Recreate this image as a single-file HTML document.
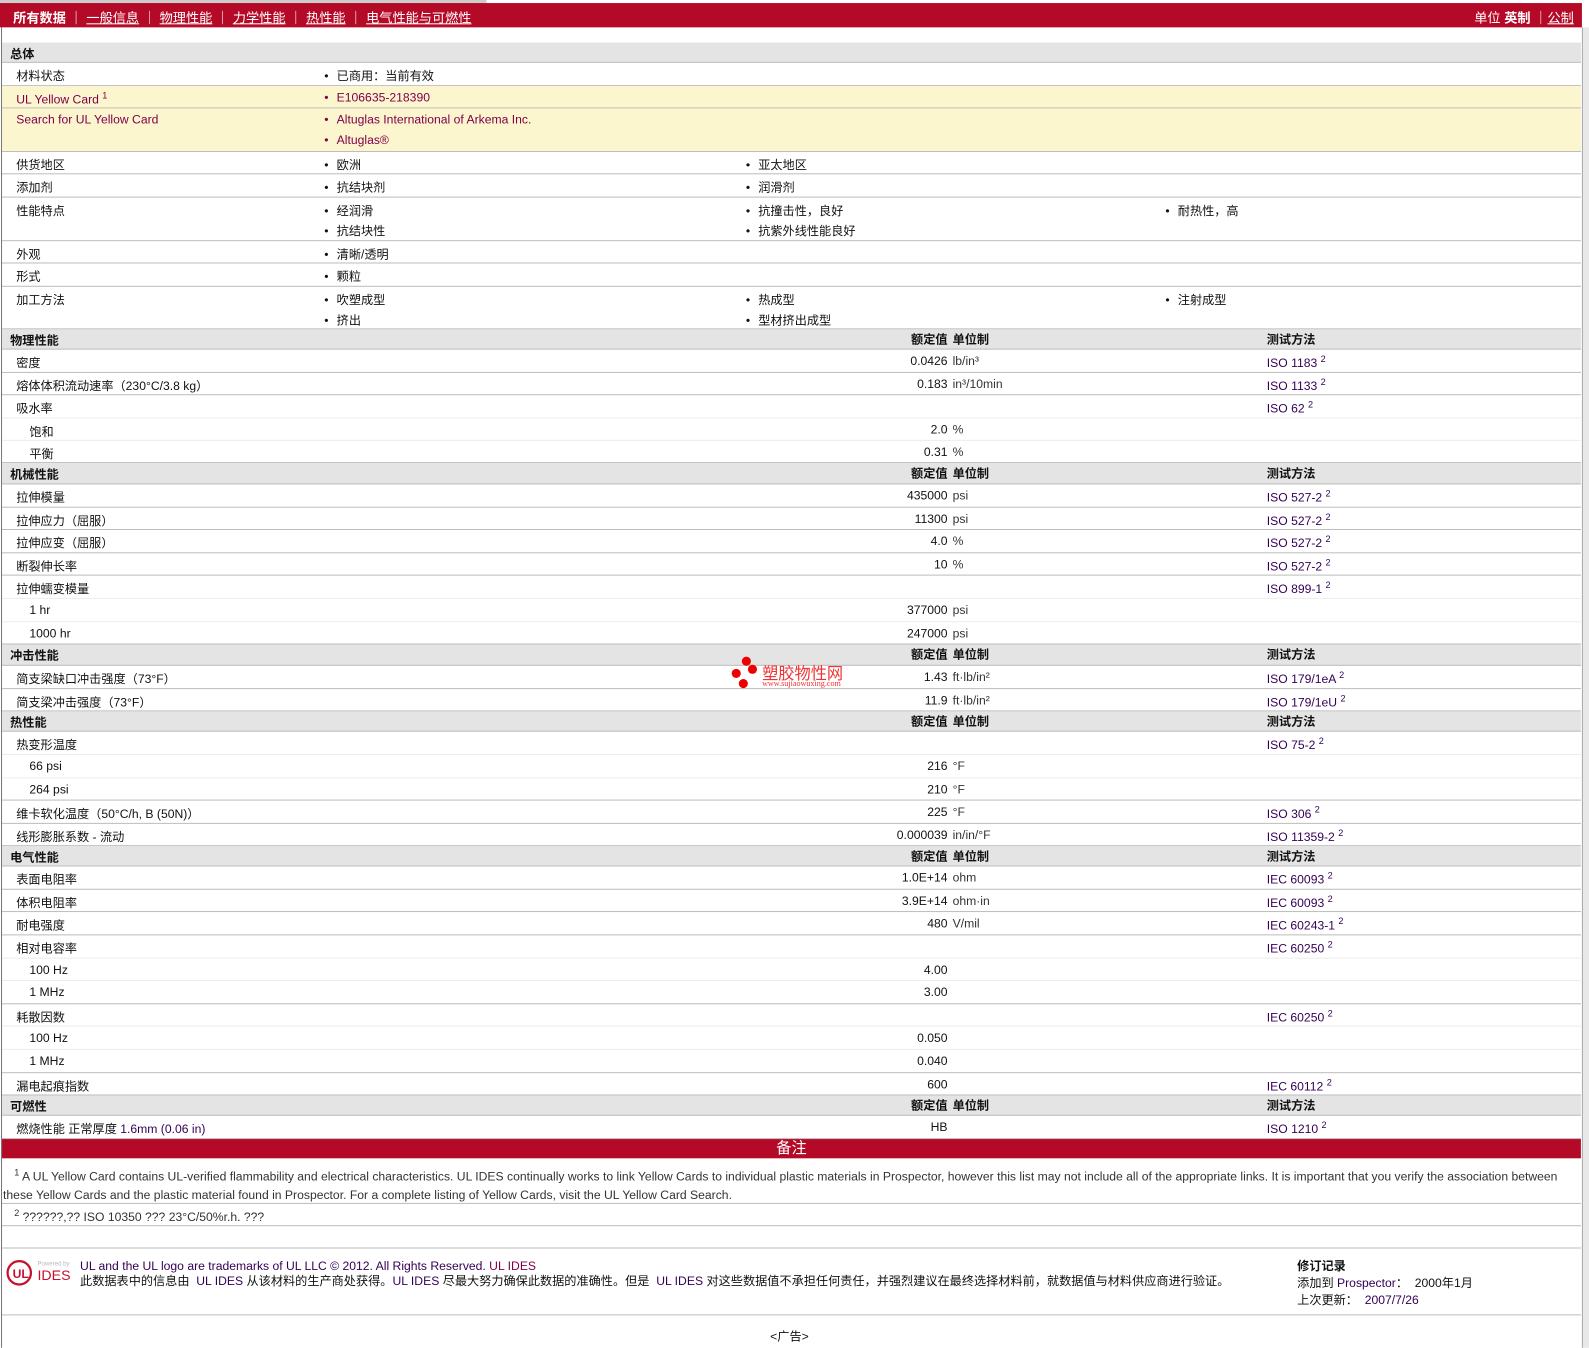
<!DOCTYPE html>
<html><head><meta charset="utf-8"><style>
*{margin:0;padding:0;box-sizing:border-box}
html,body{width:1589px;height:1348px;overflow:hidden;background:#fff}
body{font-family:"Liberation Sans","Noto Sans CJK SC",sans-serif;font-size:12px;color:#111}
#w{position:absolute;left:0;top:0;width:1568px;height:1330px;transform:scale(1.0134);transform-origin:0 0}
.r{position:absolute;left:2px;width:1558px;border-bottom:1px solid #bdbdbd}
.s{border-bottom:1px solid #ececec}
.h{background:#e4e4e4;font-weight:bold;border-bottom:1px solid #bdbdbd}
.y{background:#fcf6cf}
.r span{position:absolute;white-space:nowrap;top:4px}
.l{left:14px}.l2{left:27px}.hl{left:8px}
.b{left:318px}.b2{left:734px}.b3{left:1148px}
.b:before,.b2:before,.b3:before{content:"•";margin-right:8px}
.n{left:835px;width:98px;text-align:right}
.u{left:938px;color:#333}
.t{left:1248px;color:#305}
.t sup{font-size:9px;vertical-align:5px}
.p{color:#80004a}
.hr span.n{font-weight:bold}
#top{position:absolute;left:0;top:3px;width:1561px;height:24px;background:#b50a27;color:#fff;font-size:13px}
#top a{color:#fff;text-decoration:underline}
</style></head><body><div id="w">
<div style="position:absolute;left:0;top:0;width:480px;height:3px;background:#ccc"></div>
<div id="top"><span style="position:absolute;left:13px;top:4px"><b>所有数据</b> ｜ <a>一般信息</a> ｜ <a>物理性能</a> ｜ <a>力学性能</a> ｜ <a>热性能</a> ｜ <a>电气性能与可燃性</a></span><span style="position:absolute;right:8px;top:4px">单位 <b>英制</b> ｜<a>公制</a></span></div>
<div style="position:absolute;left:1px;top:27px;width:1px;height:1303px;background:#777"></div>
<div style="position:absolute;left:1561px;top:27px;width:7px;height:1303px;background:#e8e8e8;border-left:1px solid #aaa"></div>

<div class="r h" style="top:42px;height:20px"><span class="hl" style="top:2px">总体</span></div>
<div class="r" style="top:62px;height:23px"><span class="l">材料状态</span><span class="b">已商用：当前有效</span></div>
<div class="r y" style="top:85px;height:22px"><span class="l p">UL Yellow Card <sup style="font-size:9px">1</sup></span><span class="b p">E106635-218390</span></div>
<div class="r y" style="top:107px;height:43px"><span class="l p">Search for UL Yellow Card</span><span class="b p">Altuglas International of Arkema Inc.</span><span class="b p" style="top:24px">Altuglas®</span></div>
<div class="r" style="top:150px;height:22px"><span class="l">供货地区</span><span class="b">欧洲</span><span class="b2">亚太地区</span></div>
<div class="r" style="top:172px;height:23px"><span class="l">添加剂</span><span class="b">抗结块剂</span><span class="b2">润滑剂</span></div>
<div class="r" style="top:195px;height:43px"><span class="l">性能特点</span><span class="b">经润滑</span><span class="b2">抗撞击性，良好</span><span class="b3">耐热性，高</span><span class="b" style="top:24px">抗结块性</span><span class="b2" style="top:24px">抗紫外线性能良好</span></div>
<div class="r" style="top:238px;height:22px"><span class="l">外观</span><span class="b">清晰/透明</span></div>
<div class="r" style="top:260px;height:23px"><span class="l">形式</span><span class="b">颗粒</span></div>
<div class="r" style="top:283px;height:42px"><span class="l">加工方法</span><span class="b">吹塑成型</span><span class="b2">热成型</span><span class="b3">注射成型</span><span class="b" style="top:24px">挤出</span><span class="b2" style="top:24px">型材挤出成型</span></div>

<div class="r h hr" style="top:325px;height:20px"><span class="hl" style="top:2px">物理性能</span><span class="n" style="top:1px">额定值</span><span class="u" style="top:1px;color:#111">单位制</span><span class="t" style="top:1px;color:#111">测试方法</span></div>
<div class="r" style="top:345px;height:23px"><span class="l">密度</span><span class="n">0.0426</span><span class="u">lb/in³</span><span class="t">ISO 1183 <sup>2</sup></span></div>
<div class="r" style="top:368px;height:22px"><span class="l">熔体体积流动速率（230°C/3.8 kg）</span><span class="n">0.183</span><span class="u">in³/10min</span><span class="t">ISO 1133 <sup>2</sup></span></div>
<div class="r s" style="top:390px;height:23px"><span class="l">吸水率</span><span class="t">ISO 62 <sup>2</sup></span></div>
<div class="r s" style="top:413px;height:22px"><span class="l2">饱和</span><span class="n">2.0</span><span class="u">%</span></div>
<div class="r" style="top:435px;height:22px"><span class="l2">平衡</span><span class="n">0.31</span><span class="u">%</span></div>

<div class="r h hr" style="top:457px;height:21px"><span class="hl" style="top:2px">机械性能</span><span class="n" style="top:1px">额定值</span><span class="u" style="top:1px;color:#111">单位制</span><span class="t" style="top:1px;color:#111">测试方法</span></div>
<div class="r" style="top:478px;height:23px"><span class="l">拉伸模量</span><span class="n">435000</span><span class="u">psi</span><span class="t">ISO 527-2 <sup>2</sup></span></div>
<div class="r" style="top:501px;height:22px"><span class="l">拉伸应力（屈服）</span><span class="n">11300</span><span class="u">psi</span><span class="t">ISO 527-2 <sup>2</sup></span></div>
<div class="r" style="top:523px;height:23px"><span class="l">拉伸应变（屈服）</span><span class="n">4.0</span><span class="u">%</span><span class="t">ISO 527-2 <sup>2</sup></span></div>
<div class="r" style="top:546px;height:22px"><span class="l">断裂伸长率</span><span class="n">10</span><span class="u">%</span><span class="t">ISO 527-2 <sup>2</sup></span></div>
<div class="r s" style="top:568px;height:23px"><span class="l">拉伸蠕变模量</span><span class="t">ISO 899-1 <sup>2</sup></span></div>
<div class="r s" style="top:591px;height:23px"><span class="l2">1 hr</span><span class="n">377000</span><span class="u">psi</span></div>
<div class="r" style="top:614px;height:22px"><span class="l2">1000 hr</span><span class="n">247000</span><span class="u">psi</span></div>

<div class="r h hr" style="top:636px;height:21px"><span class="hl" style="top:2px">冲击性能</span><span class="n" style="top:1px">额定值</span><span class="u" style="top:1px;color:#111">单位制</span><span class="t" style="top:1px;color:#111">测试方法</span></div>
<div class="r" style="top:657px;height:23px"><span class="l">简支梁缺口冲击强度（73°F）</span><span class="n">1.43</span><span class="u">ft·lb/in²</span><span class="t">ISO 179/1eA <sup>2</sup></span></div>
<div class="r" style="top:680px;height:22px"><span class="l">简支梁冲击强度（73°F）</span><span class="n">11.9</span><span class="u">ft·lb/in²</span><span class="t">ISO 179/1eU <sup>2</sup></span></div>

<div class="r h hr" style="top:702px;height:20px"><span class="hl" style="top:2px">热性能</span><span class="n" style="top:1px">额定值</span><span class="u" style="top:1px;color:#111">单位制</span><span class="t" style="top:1px;color:#111">测试方法</span></div>
<div class="r s" style="top:722px;height:23px"><span class="l">热变形温度</span><span class="t">ISO 75-2 <sup>2</sup></span></div>
<div class="r s" style="top:745px;height:23px"><span class="l2">66 psi</span><span class="n">216</span><span class="u">°F</span></div>
<div class="r" style="top:768px;height:22px"><span class="l2">264 psi</span><span class="n">210</span><span class="u">°F</span></div>
<div class="r" style="top:790px;height:23px"><span class="l">维卡软化温度（50°C/h, B (50N)）</span><span class="n">225</span><span class="u">°F</span><span class="t">ISO 306 <sup>2</sup></span></div>
<div class="r" style="top:813px;height:22px"><span class="l">线形膨胀系数 - 流动</span><span class="n">0.000039</span><span class="u">in/in/°F</span><span class="t">ISO 11359-2 <sup>2</sup></span></div>

<div class="r h hr" style="top:835px;height:20px"><span class="hl" style="top:2px">电气性能</span><span class="n" style="top:1px">额定值</span><span class="u" style="top:1px;color:#111">单位制</span><span class="t" style="top:1px;color:#111">测试方法</span></div>
<div class="r" style="top:855px;height:23px"><span class="l">表面电阻率</span><span class="n">1.0E+14</span><span class="u">ohm</span><span class="t">IEC 60093 <sup>2</sup></span></div>
<div class="r" style="top:878px;height:22px"><span class="l">体积电阻率</span><span class="n">3.9E+14</span><span class="u">ohm·in</span><span class="t">IEC 60093 <sup>2</sup></span></div>
<div class="r" style="top:900px;height:23px"><span class="l">耐电强度</span><span class="n">480</span><span class="u">V/mil</span><span class="t">IEC 60243-1 <sup>2</sup></span></div>
<div class="r s" style="top:923px;height:23px"><span class="l">相对电容率</span><span class="t">IEC 60250 <sup>2</sup></span></div>
<div class="r s" style="top:946px;height:22px"><span class="l2">100 Hz</span><span class="n">4.00</span></div>
<div class="r" style="top:968px;height:23px"><span class="l2">1 MHz</span><span class="n">3.00</span></div>
<div class="r s" style="top:991px;height:22px"><span class="l">耗散因数</span><span class="t">IEC 60250 <sup>2</sup></span></div>
<div class="r s" style="top:1013px;height:23px"><span class="l2">100 Hz</span><span class="n">0.050</span></div>
<div class="r" style="top:1036px;height:23px"><span class="l2">1 MHz</span><span class="n">0.040</span></div>
<div class="r" style="top:1059px;height:22px"><span class="l">漏电起痕指数</span><span class="n">600</span><span class="t">IEC 60112 <sup>2</sup></span></div>

<div class="r h hr" style="top:1081px;height:20px"><span class="hl" style="top:2px">可燃性</span><span class="n" style="top:1px">额定值</span><span class="u" style="top:1px;color:#111">单位制</span><span class="t" style="top:1px;color:#111">测试方法</span></div>
<div class="r" style="top:1101px;height:23px"><span class="l">燃烧性能 正常厚度 <span style="position:static;color:#305">1.6mm (0.06 in)</span></span><span class="n">HB</span><span class="t">ISO 1210 <sup>2</sup></span></div>

<div style="position:absolute;left:2px;top:1124px;width:1558px;height:19px;background:#b50a27;color:#fff;font-size:15px;text-align:center;line-height:19px">备注</div>
<div class="r" style="top:1143px;height:45px;color:#333"><span style="left:1px;top:5px;line-height:18px;white-space:normal;width:1545px;text-indent:11px"><sup style="font-size:9px">1</sup> A UL Yellow Card contains UL-verified flammability and electrical characteristics. UL IDES continually works to link Yellow Cards to individual plastic materials in Prospector, however this list may not include all of the appropriate links. It is important that you verify the association between these Yellow Cards and the plastic material found in Prospector. For a complete listing of Yellow Cards, visit the UL Yellow Card Search.</span></div>
<div class="r" style="top:1188px;height:22px;color:#333"><span style="left:12px"><sup style="font-size:9px">2</sup> ??????,?? ISO 10350 ??? 23°C/50%r.h. ???</span></div>
<div class="r" style="top:1210px;height:22px"></div>
<div class="r" style="top:1232px;height:66px">
<svg style="position:absolute;left:4px;top:10px" width="66" height="30" viewBox="0 0 66 30"><circle cx="13" cy="14" r="11.5" fill="none" stroke="#c8102e" stroke-width="2.2"/><text x="6.5" y="19" font-family="Liberation Sans" font-size="12" font-weight="bold" fill="#c8102e">UL</text><text x="31" y="7" font-family="Liberation Sans" font-size="6" fill="#bbb">Powered by</text><text x="31" y="21" font-family="Liberation Sans" font-size="14" fill="#c8102e">IDES</text></svg>
<span style="left:77px;top:10px;color:#305">UL and the UL logo are trademarks of UL LLC © 2012. All Rights Reserved. <span style="position:static;color:#80004a">UL IDES</span></span>
<span style="left:77px;top:25px;white-space:normal;width:1175px;line-height:15px">此数据表中的信息由&nbsp; <span style="position:static;color:#305">UL IDES</span> 从该材料的生产商处获得。<span style="position:static;color:#305">UL IDES</span> 尽最大努力确保此数据的准确性。但是&nbsp; <span style="position:static;color:#305">UL IDES</span> 对这些数据值不承担任何责任，并强烈建议在最终选择材料前，就数据值与材料供应商进行验证。</span>
<span style="left:1278px;top:8px;font-weight:bold">修订记录</span>
<span style="left:1278px;top:25px">添加到 <span style="position:static;color:#305">Prospector</span>：&nbsp; 2000年1月</span>
<span style="left:1278px;top:42px">上次更新：&nbsp; <span style="position:static;color:#305">2007/7/26</span></span>
</div>
<div style="position:absolute;left:760px;top:1310px">&lt;广告&gt;</div>
<div style="position:absolute;left:720px;top:648px;width:130px;height:34px">
<div style="position:absolute;left:12px;top:0;width:9px;height:9px;border-radius:50%;background:#e00"></div>
<div style="position:absolute;left:18px;top:8px;width:9px;height:9px;border-radius:50%;background:#e00"></div>
<div style="position:absolute;left:2px;top:12px;width:9px;height:9px;border-radius:50%;background:#e00"></div>
<div style="position:absolute;left:9px;top:22px;width:9px;height:9px;border-radius:50%;background:#e00"></div>
<div style="position:absolute;left:32px;top:3px;color:#e33;font-size:16px">塑胶物性网</div>
<div style="position:absolute;left:32px;top:22px;color:#e33;font-size:8px;font-family:'Liberation Serif',serif">www.sujiaowuxing.com</div>
</div>
</div></body></html>
